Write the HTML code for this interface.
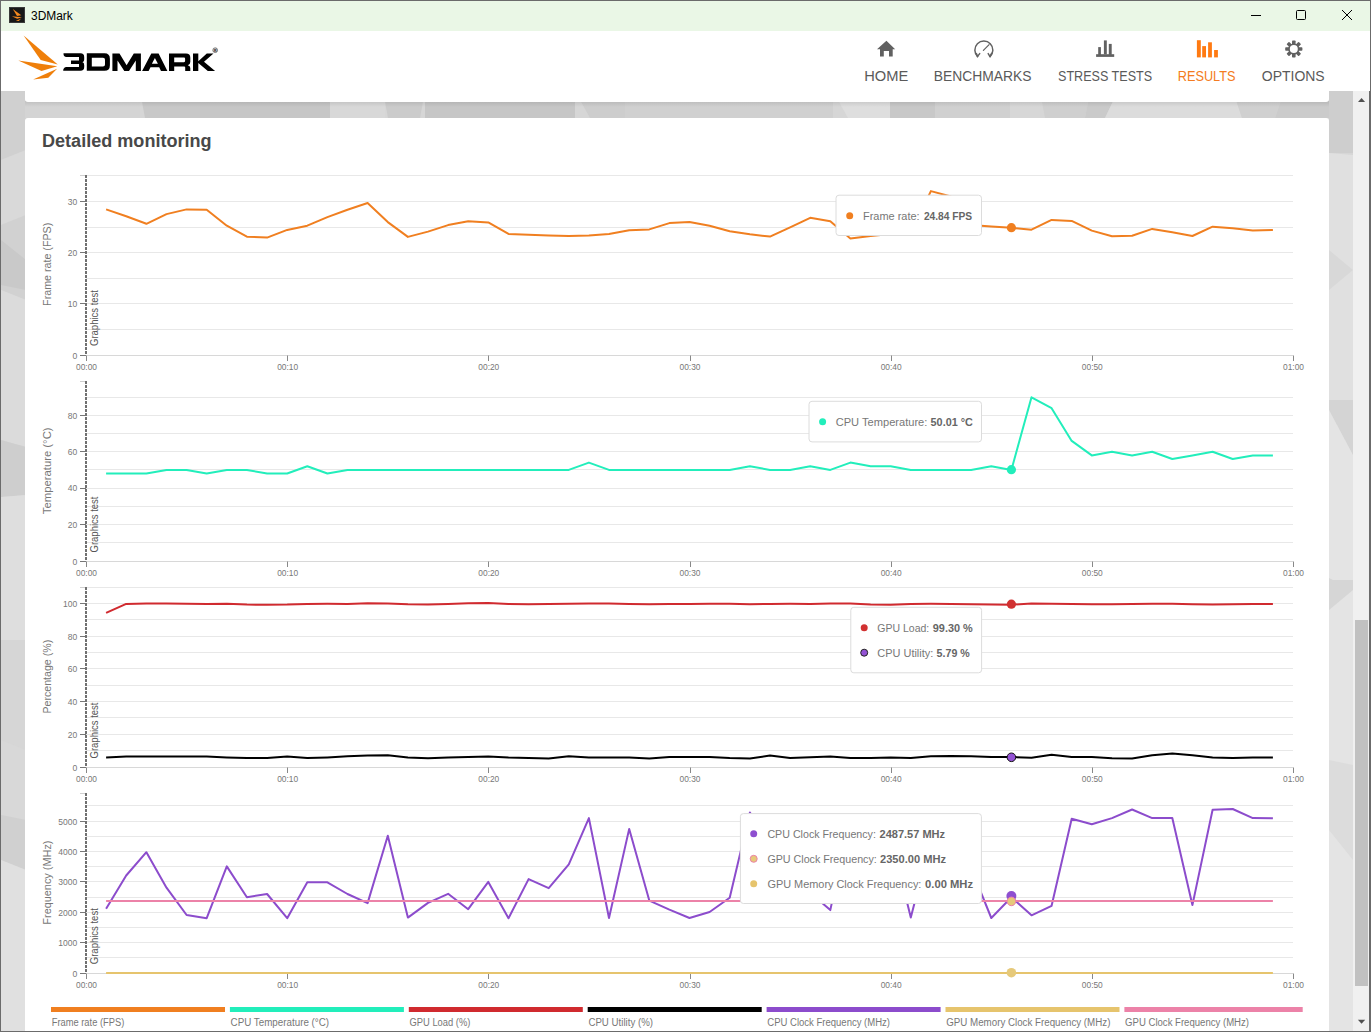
<!DOCTYPE html>
<html><head><meta charset="utf-8"><style>
html,body{margin:0;padding:0;width:1371px;height:1032px;overflow:hidden;background:#fff;font-family:"Liberation Sans",sans-serif;}
#win{position:absolute;left:0;top:0;width:1371px;height:1032px;}
</style></head><body>
<div id="win">
<div style="position:absolute;left:0;top:0;width:1371px;height:1032px;background:#6b6b6b"></div>
<div style="position:absolute;left:1px;top:1px;width:1369px;height:30px;background:#eaf7e6"></div>
<div style="position:absolute;left:1px;top:31px;width:1369px;height:60px;background:#fff"></div>

<svg style="position:absolute;left:1px;top:91px" width="1352" height="940" viewBox="1 91 1352 940">
 <rect x="1" y="91" width="1352" height="940" fill="#d6d6d6"/>
 <!-- left strip -->
 <polygon points="1,91 26,91 26,150 1,160" fill="#d0d0d0"/>
 <polygon points="1,160 26,150 26,215 1,225" fill="#d9d9d9"/>
 <polygon points="1,225 26,215 26,300 1,290" fill="#d1d1d1"/>
 <polygon points="1,240 26,260 26,290 1,285" fill="#c9c9c9"/>
 <polygon points="1,290 26,300 26,447 1,440" fill="#dbdbdb"/>
 <polygon points="1,440 26,447 26,495 1,497" fill="#cecece"/>
 <polygon points="1,497 26,495 26,640 1,640" fill="#dedede"/>
 <polygon points="1,640 26,640 26,750 1,740" fill="#d6d6d6"/>
 <polygon points="1,740 26,750 26,820 1,815" fill="#d8d8d8"/>
 <polygon points="1,815 26,820 26,870 1,860" fill="#d0d0d0"/>
 <polygon points="1,860 26,870 26,1031 1,1031" fill="#e0e0e0"/>
 <!-- gap strip -->
 <rect x="25" y="91" width="115" height="27" fill="#d4d4d4"/>
 <polygon points="140,91 200,91 200,118 145,118" fill="#c8c8c8"/>
 <rect x="200" y="91" width="130" height="27" fill="#c6c6c6"/>
 <rect x="330" y="91" width="55" height="27" fill="#d8d8d8"/>
 <polygon points="383,91 425,91 420,118 388,118" fill="#cbcbcb"/>
 <rect x="425" y="91" width="150" height="27" fill="#c6c6c6"/>
 <polygon points="575,91 625,91 625,118 590,118" fill="#cdcdcd"/>
 <rect x="625" y="91" width="208" height="27" fill="#d0d0d0"/>
 <polygon points="833,91 890,91 890,118 848,118" fill="#dedede"/>
 <polygon points="890,91 940,91 935,118 890,118" fill="#c8c8c8"/>
 <rect x="935" y="91" width="75" height="27" fill="#d0d0d0"/>
 <rect x="1010" y="91" width="30" height="27" fill="#d7d7d7"/>
 <polygon points="1040,91 1090,91 1085,118 1045,118" fill="#cfcfcf"/>
 <polygon points="1090,91 1118,91 1105,118 1085,118" fill="#cacaca"/>
 <polygon points="1118,91 1233,91 1242,118 1105,118" fill="#dcdcdc"/>
 <polygon points="1233,91 1284,91 1275,118 1242,118" fill="#d0d0d0"/>
 <polygon points="1284,91 1329,91 1329,118 1275,118" fill="#cbcbcb"/>
 <!-- right strip -->
 <rect x="1329" y="91" width="24" height="62" fill="#cecece"/>
 <polygon points="1329,153 1353,155 1353,400 1329,400" fill="#e0e0e0"/>
 <polygon points="1329,250 1353,270 1329,290" fill="#d8d8d8"/>
 <polygon points="1329,400 1353,400 1353,455 1329,410" fill="#d4d4d4"/>
 <polygon points="1329,410 1353,455 1353,580 1329,580" fill="#e4e4e4"/>
 <polygon points="1329,578 1353,590 1329,610" fill="#d6d6d6"/>
 <polygon points="1329,610 1353,590 1353,1031 1329,1031" fill="#e4e4e4"/>
 <polygon points="1329,760 1353,765 1353,860 1329,830" fill="#dcdcdc"/>
 <!-- shadow under top card -->
 <defs><linearGradient id="sh" x1="0" y1="0" x2="0" y2="1"><stop offset="0" stop-color="#000" stop-opacity="0.10"/><stop offset="1" stop-color="#000" stop-opacity="0"/></linearGradient></defs>
 <rect x="25" y="101" width="1304" height="6" fill="url(#sh)"/>
</svg>
<div style="position:absolute;left:25px;top:91px;width:1304px;height:10.5px;background:#fff;border-radius:0 0 3px 3px;"></div>
<div style="position:absolute;left:25px;top:118px;width:1304px;height:913px;background:#fff;border-radius:3px 3px 0 0"></div>
<div style="position:absolute;left:1353px;top:91px;width:16px;height:940px;background:#f0f0f0"></div>
<div style="position:absolute;left:1355px;top:620px;width:13px;height:366px;background:#c1c1c1"></div>
<svg style="position:absolute;left:0;top:0" width="1371" height="1032" viewBox="0 0 1371 1032">
 <polygon points="1358,101.9 1365.1,101.9 1361.55,97.9" fill="#505050"/>
 <polygon points="1357.9,1019.7 1365.2,1019.7 1361.55,1023.7" fill="#505050"/>
 <!-- title bar -->
 <rect x="9.5" y="7.5" width="15" height="15" fill="#181818" stroke="#3a3a3a" stroke-width="1"/>
 <g fill="#f58a1f">
  <polygon points="12.8,9.0 21.3,15.3 17.0,16.0"/>
  <polygon points="11.8,16.2 21.9,17.2 17.2,18.8"/>
  <polygon points="15.8,20.9 21.2,18.4 18.8,21.0"/>
 </g>
 <text x="31" y="19.9" font-size="12.3" fill="#000" font-family="Liberation Sans, sans-serif" textLength="41.8" lengthAdjust="spacingAndGlyphs">3DMark</text>
 <line x1="1251" x2="1261" y1="15.5" y2="15.5" stroke="#000" stroke-width="1"/>
 <rect x="1296.5" y="10.5" width="9" height="9" rx="1" fill="none" stroke="#000" stroke-width="1"/>
 <path d="M1342,10 L1352,20 M1352,10 L1342,20" stroke="#000" stroke-width="1"/>
 <text x="864.2" y="80.8" font-size="15" fill="#5a5a5a" font-family="Liberation Sans, sans-serif" textLength="44.0" lengthAdjust="spacingAndGlyphs">HOME</text>
<text x="933.8" y="80.8" font-size="15" fill="#5a5a5a" font-family="Liberation Sans, sans-serif" textLength="97.8" lengthAdjust="spacingAndGlyphs">BENCHMARKS</text>
<text x="1058.0" y="80.8" font-size="15" fill="#5a5a5a" font-family="Liberation Sans, sans-serif" textLength="94.1" lengthAdjust="spacingAndGlyphs">STRESS TESTS</text>
<text x="1177.7" y="80.8" font-size="15" fill="#f47b20" font-family="Liberation Sans, sans-serif" textLength="57.8" lengthAdjust="spacingAndGlyphs">RESULTS</text>
<text x="1261.8" y="80.8" font-size="15" fill="#5a5a5a" font-family="Liberation Sans, sans-serif" textLength="62.9" lengthAdjust="spacingAndGlyphs">OPTIONS</text>
 <text x="42" y="146.7" font-size="18.7" font-weight="bold" fill="#484848" font-family="Liberation Sans, sans-serif" textLength="169.6" lengthAdjust="spacingAndGlyphs">Detailed monitoring</text>
<line x1="86" x2="1293" y1="175.5" y2="175.5" stroke="#e8e8e8" stroke-width="1"/>
<line x1="86" x2="1293" y1="201.5" y2="201.5" stroke="#e8e8e8" stroke-width="1"/>
<line x1="86" x2="1293" y1="227.5" y2="227.5" stroke="#e8e8e8" stroke-width="1"/>
<line x1="86" x2="1293" y1="252.5" y2="252.5" stroke="#e8e8e8" stroke-width="1"/>
<line x1="86" x2="1293" y1="278.5" y2="278.5" stroke="#e8e8e8" stroke-width="1"/>
<line x1="86" x2="1293" y1="303.5" y2="303.5" stroke="#e8e8e8" stroke-width="1"/>
<line x1="86" x2="1293" y1="329.5" y2="329.5" stroke="#e8e8e8" stroke-width="1"/>
<line x1="80" x2="86" y1="175.5" y2="175.5" stroke="#d0d0d0" stroke-width="1"/>
<line x1="80" x2="1293" y1="355.5" y2="355.5" stroke="#d8d8d8" stroke-width="1"/>
<line x1="80" x2="86" y1="355.5" y2="355.5" stroke="#777" stroke-width="1"/>
<text x="77.3" y="358.9" text-anchor="end" font-size="9.5" fill="#777" font-family="Liberation Sans, sans-serif" textLength="4.8" lengthAdjust="spacingAndGlyphs">0</text>
<line x1="80" x2="86" y1="303.5" y2="303.5" stroke="#777" stroke-width="1"/>
<text x="77.3" y="306.9" text-anchor="end" font-size="9.5" fill="#777" font-family="Liberation Sans, sans-serif" textLength="9.5" lengthAdjust="spacingAndGlyphs">10</text>
<line x1="80" x2="86" y1="252.5" y2="252.5" stroke="#777" stroke-width="1"/>
<text x="77.3" y="255.7" text-anchor="end" font-size="9.5" fill="#777" font-family="Liberation Sans, sans-serif" textLength="9.5" lengthAdjust="spacingAndGlyphs">20</text>
<line x1="80" x2="86" y1="201.5" y2="201.5" stroke="#777" stroke-width="1"/>
<text x="77.3" y="204.5" text-anchor="end" font-size="9.5" fill="#777" font-family="Liberation Sans, sans-serif" textLength="9.5" lengthAdjust="spacingAndGlyphs">30</text>
<line x1="86.5" x2="86.5" y1="355.5" y2="361.0" stroke="#888" stroke-width="1"/>
<text x="86.5" y="370.0" text-anchor="middle" font-size="9.5" fill="#777" font-family="Liberation Sans, sans-serif" textLength="21" lengthAdjust="spacingAndGlyphs">00:00</text>
<line x1="287.5" x2="287.5" y1="355.5" y2="361.0" stroke="#888" stroke-width="1"/>
<text x="287.7" y="370.0" text-anchor="middle" font-size="9.5" fill="#777" font-family="Liberation Sans, sans-serif" textLength="21" lengthAdjust="spacingAndGlyphs">00:10</text>
<line x1="488.5" x2="488.5" y1="355.5" y2="361.0" stroke="#888" stroke-width="1"/>
<text x="488.8" y="370.0" text-anchor="middle" font-size="9.5" fill="#777" font-family="Liberation Sans, sans-serif" textLength="21" lengthAdjust="spacingAndGlyphs">00:20</text>
<line x1="690.5" x2="690.5" y1="355.5" y2="361.0" stroke="#888" stroke-width="1"/>
<text x="690.0" y="370.0" text-anchor="middle" font-size="9.5" fill="#777" font-family="Liberation Sans, sans-serif" textLength="21" lengthAdjust="spacingAndGlyphs">00:30</text>
<line x1="891.5" x2="891.5" y1="355.5" y2="361.0" stroke="#888" stroke-width="1"/>
<text x="891.2" y="370.0" text-anchor="middle" font-size="9.5" fill="#777" font-family="Liberation Sans, sans-serif" textLength="21" lengthAdjust="spacingAndGlyphs">00:40</text>
<line x1="1092.5" x2="1092.5" y1="355.5" y2="361.0" stroke="#888" stroke-width="1"/>
<text x="1092.3" y="370.0" text-anchor="middle" font-size="9.5" fill="#777" font-family="Liberation Sans, sans-serif" textLength="21" lengthAdjust="spacingAndGlyphs">00:50</text>
<line x1="1293.5" x2="1293.5" y1="355.5" y2="361.0" stroke="#888" stroke-width="1"/>
<text x="1293.5" y="370.0" text-anchor="middle" font-size="9.5" fill="#777" font-family="Liberation Sans, sans-serif" textLength="21" lengthAdjust="spacingAndGlyphs">01:00</text>
<line x1="86" x2="86" y1="175" y2="354" stroke="#707070" stroke-width="2" stroke-dasharray="3,1"/>
<text transform="translate(50.5 264.3) rotate(-90)" text-anchor="middle" font-size="11" fill="#777" font-family="Liberation Sans, sans-serif" textLength="83.2" lengthAdjust="spacingAndGlyphs">Frame rate (FPS)</text>
<text transform="translate(97.5 346.0) rotate(-90)" text-anchor="start" font-size="10" fill="#555" font-family="Liberation Sans, sans-serif" textLength="56" lengthAdjust="spacingAndGlyphs">Graphics test</text>
<polyline points="106.1,209.4 126.2,216.3 146.4,223.8 166.5,214.1 186.6,209.4 206.7,209.7 226.8,225.7 246.9,236.7 267.1,237.6 287.2,229.9 307.3,225.7 327.4,217.1 347.5,209.8 367.6,203.0 387.8,222.1 407.9,236.9 428.0,231.6 448.1,225.1 468.2,221.3 488.3,222.4 508.5,233.9 528.6,234.8 548.7,235.4 568.8,236.0 588.9,235.4 609.0,233.9 629.2,230.3 649.3,229.4 669.4,223.1 689.5,222.0 709.6,225.8 729.7,231.2 749.9,234.2 770.0,236.6 790.1,227.3 810.2,217.8 830.3,221.2 850.4,238.5 870.6,236.0 890.7,234.0 910.8,232.0 930.9,191.1 951.0,196.5 971.1,225.0 991.3,226.6 1011.4,227.8 1031.5,229.7 1051.6,219.9 1071.7,220.9 1091.8,230.6 1112.0,236.3 1132.1,235.7 1152.2,228.9 1172.3,232.3 1192.4,236.0 1212.6,226.7 1232.7,228.3 1252.8,230.4 1272.9,229.9" fill="none" stroke="#f07f20" stroke-width="2" stroke-linejoin="round" stroke-linecap="butt" />
<line x1="86" x2="1293" y1="542.5" y2="542.5" stroke="#e8e8e8" stroke-width="1"/>
<line x1="86" x2="1293" y1="524.5" y2="524.5" stroke="#e8e8e8" stroke-width="1"/>
<line x1="86" x2="1293" y1="506.5" y2="506.5" stroke="#e8e8e8" stroke-width="1"/>
<line x1="86" x2="1293" y1="488.5" y2="488.5" stroke="#e8e8e8" stroke-width="1"/>
<line x1="86" x2="1293" y1="469.5" y2="469.5" stroke="#e8e8e8" stroke-width="1"/>
<line x1="86" x2="1293" y1="451.5" y2="451.5" stroke="#e8e8e8" stroke-width="1"/>
<line x1="86" x2="1293" y1="433.5" y2="433.5" stroke="#e8e8e8" stroke-width="1"/>
<line x1="86" x2="1293" y1="415.5" y2="415.5" stroke="#e8e8e8" stroke-width="1"/>
<line x1="86" x2="1293" y1="397.5" y2="397.5" stroke="#e8e8e8" stroke-width="1"/>
<line x1="80" x2="86" y1="381.5" y2="381.5" stroke="#d0d0d0" stroke-width="1"/>
<line x1="80" x2="1293" y1="561.5" y2="561.5" stroke="#d8d8d8" stroke-width="1"/>
<line x1="80" x2="86" y1="561.5" y2="561.5" stroke="#777" stroke-width="1"/>
<text x="77.3" y="564.9" text-anchor="end" font-size="9.5" fill="#777" font-family="Liberation Sans, sans-serif" textLength="4.8" lengthAdjust="spacingAndGlyphs">0</text>
<line x1="80" x2="86" y1="524.5" y2="524.5" stroke="#777" stroke-width="1"/>
<text x="77.3" y="527.7" text-anchor="end" font-size="9.5" fill="#777" font-family="Liberation Sans, sans-serif" textLength="9.5" lengthAdjust="spacingAndGlyphs">20</text>
<line x1="80" x2="86" y1="488.5" y2="488.5" stroke="#777" stroke-width="1"/>
<text x="77.3" y="491.4" text-anchor="end" font-size="9.5" fill="#777" font-family="Liberation Sans, sans-serif" textLength="9.5" lengthAdjust="spacingAndGlyphs">40</text>
<line x1="80" x2="86" y1="451.5" y2="451.5" stroke="#777" stroke-width="1"/>
<text x="77.3" y="455.2" text-anchor="end" font-size="9.5" fill="#777" font-family="Liberation Sans, sans-serif" textLength="9.5" lengthAdjust="spacingAndGlyphs">60</text>
<line x1="80" x2="86" y1="415.5" y2="415.5" stroke="#777" stroke-width="1"/>
<text x="77.3" y="418.9" text-anchor="end" font-size="9.5" fill="#777" font-family="Liberation Sans, sans-serif" textLength="9.5" lengthAdjust="spacingAndGlyphs">80</text>
<line x1="86.5" x2="86.5" y1="561.5" y2="567.0" stroke="#888" stroke-width="1"/>
<text x="86.5" y="576.0" text-anchor="middle" font-size="9.5" fill="#777" font-family="Liberation Sans, sans-serif" textLength="21" lengthAdjust="spacingAndGlyphs">00:00</text>
<line x1="287.5" x2="287.5" y1="561.5" y2="567.0" stroke="#888" stroke-width="1"/>
<text x="287.7" y="576.0" text-anchor="middle" font-size="9.5" fill="#777" font-family="Liberation Sans, sans-serif" textLength="21" lengthAdjust="spacingAndGlyphs">00:10</text>
<line x1="488.5" x2="488.5" y1="561.5" y2="567.0" stroke="#888" stroke-width="1"/>
<text x="488.8" y="576.0" text-anchor="middle" font-size="9.5" fill="#777" font-family="Liberation Sans, sans-serif" textLength="21" lengthAdjust="spacingAndGlyphs">00:20</text>
<line x1="690.5" x2="690.5" y1="561.5" y2="567.0" stroke="#888" stroke-width="1"/>
<text x="690.0" y="576.0" text-anchor="middle" font-size="9.5" fill="#777" font-family="Liberation Sans, sans-serif" textLength="21" lengthAdjust="spacingAndGlyphs">00:30</text>
<line x1="891.5" x2="891.5" y1="561.5" y2="567.0" stroke="#888" stroke-width="1"/>
<text x="891.2" y="576.0" text-anchor="middle" font-size="9.5" fill="#777" font-family="Liberation Sans, sans-serif" textLength="21" lengthAdjust="spacingAndGlyphs">00:40</text>
<line x1="1092.5" x2="1092.5" y1="561.5" y2="567.0" stroke="#888" stroke-width="1"/>
<text x="1092.3" y="576.0" text-anchor="middle" font-size="9.5" fill="#777" font-family="Liberation Sans, sans-serif" textLength="21" lengthAdjust="spacingAndGlyphs">00:50</text>
<line x1="1293.5" x2="1293.5" y1="561.5" y2="567.0" stroke="#888" stroke-width="1"/>
<text x="1293.5" y="576.0" text-anchor="middle" font-size="9.5" fill="#777" font-family="Liberation Sans, sans-serif" textLength="21" lengthAdjust="spacingAndGlyphs">01:00</text>
<line x1="86" x2="86" y1="381" y2="560" stroke="#707070" stroke-width="2" stroke-dasharray="3,1"/>
<text transform="translate(50.5 470.8) rotate(-90)" text-anchor="middle" font-size="11" fill="#777" font-family="Liberation Sans, sans-serif" textLength="86.7" lengthAdjust="spacingAndGlyphs">Temperature (°C)</text>
<text transform="translate(97.5 552.5) rotate(-90)" text-anchor="start" font-size="10" fill="#555" font-family="Liberation Sans, sans-serif" textLength="56" lengthAdjust="spacingAndGlyphs">Graphics test</text>
<polyline points="106.1,473.5 126.2,473.5 146.4,473.5 166.5,469.9 186.6,469.9 206.7,473.5 226.8,469.9 246.9,469.9 267.1,473.5 287.2,473.5 307.3,466.3 327.4,473.5 347.5,469.9 367.6,469.9 387.8,469.9 407.9,469.9 428.0,469.9 448.1,469.9 468.2,469.9 488.3,469.9 508.5,469.9 528.6,469.9 548.7,469.9 568.8,469.9 588.9,462.6 609.0,469.9 629.2,469.9 649.3,469.9 669.4,469.9 689.5,469.9 709.6,469.9 729.7,469.9 749.9,466.3 770.0,469.9 790.1,469.9 810.2,466.3 830.3,469.9 850.4,462.6 870.6,466.3 890.7,466.3 910.8,469.9 930.9,469.9 951.0,469.9 971.1,469.9 991.3,466.3 1011.4,469.9 1031.5,397.3 1051.6,408.2 1071.7,440.9 1091.8,455.4 1112.0,451.8 1132.1,455.4 1152.2,451.8 1172.3,459.0 1192.4,455.4 1212.6,451.8 1232.7,459.0 1252.8,455.4 1272.9,455.4" fill="none" stroke="#22eebb" stroke-width="2" stroke-linejoin="round" stroke-linecap="butt" />
<line x1="86" x2="1293" y1="750.5" y2="750.5" stroke="#e8e8e8" stroke-width="1"/>
<line x1="86" x2="1293" y1="734.5" y2="734.5" stroke="#e8e8e8" stroke-width="1"/>
<line x1="86" x2="1293" y1="717.5" y2="717.5" stroke="#e8e8e8" stroke-width="1"/>
<line x1="86" x2="1293" y1="701.5" y2="701.5" stroke="#e8e8e8" stroke-width="1"/>
<line x1="86" x2="1293" y1="685.5" y2="685.5" stroke="#e8e8e8" stroke-width="1"/>
<line x1="86" x2="1293" y1="668.5" y2="668.5" stroke="#e8e8e8" stroke-width="1"/>
<line x1="86" x2="1293" y1="652.5" y2="652.5" stroke="#e8e8e8" stroke-width="1"/>
<line x1="86" x2="1293" y1="636.5" y2="636.5" stroke="#e8e8e8" stroke-width="1"/>
<line x1="86" x2="1293" y1="619.5" y2="619.5" stroke="#e8e8e8" stroke-width="1"/>
<line x1="86" x2="1293" y1="603.5" y2="603.5" stroke="#e8e8e8" stroke-width="1"/>
<line x1="86" x2="1293" y1="587.5" y2="587.5" stroke="#e8e8e8" stroke-width="1"/>
<line x1="80" x2="86" y1="587.5" y2="587.5" stroke="#d0d0d0" stroke-width="1"/>
<line x1="80" x2="1293" y1="767.5" y2="767.5" stroke="#d8d8d8" stroke-width="1"/>
<line x1="80" x2="86" y1="767.5" y2="767.5" stroke="#777" stroke-width="1"/>
<text x="77.3" y="770.9" text-anchor="end" font-size="9.5" fill="#777" font-family="Liberation Sans, sans-serif" textLength="4.8" lengthAdjust="spacingAndGlyphs">0</text>
<line x1="80" x2="86" y1="734.5" y2="734.5" stroke="#777" stroke-width="1"/>
<text x="77.3" y="737.6" text-anchor="end" font-size="9.5" fill="#777" font-family="Liberation Sans, sans-serif" textLength="9.5" lengthAdjust="spacingAndGlyphs">20</text>
<line x1="80" x2="86" y1="701.5" y2="701.5" stroke="#777" stroke-width="1"/>
<text x="77.3" y="704.9" text-anchor="end" font-size="9.5" fill="#777" font-family="Liberation Sans, sans-serif" textLength="9.5" lengthAdjust="spacingAndGlyphs">40</text>
<line x1="80" x2="86" y1="668.5" y2="668.5" stroke="#777" stroke-width="1"/>
<text x="77.3" y="672.3" text-anchor="end" font-size="9.5" fill="#777" font-family="Liberation Sans, sans-serif" textLength="9.5" lengthAdjust="spacingAndGlyphs">60</text>
<line x1="80" x2="86" y1="636.5" y2="636.5" stroke="#777" stroke-width="1"/>
<text x="77.3" y="639.6" text-anchor="end" font-size="9.5" fill="#777" font-family="Liberation Sans, sans-serif" textLength="9.5" lengthAdjust="spacingAndGlyphs">80</text>
<line x1="80" x2="86" y1="603.5" y2="603.5" stroke="#777" stroke-width="1"/>
<text x="77.3" y="607.0" text-anchor="end" font-size="9.5" fill="#777" font-family="Liberation Sans, sans-serif" textLength="14.2" lengthAdjust="spacingAndGlyphs">100</text>
<line x1="86.5" x2="86.5" y1="767.5" y2="773.0" stroke="#888" stroke-width="1"/>
<text x="86.5" y="782.0" text-anchor="middle" font-size="9.5" fill="#777" font-family="Liberation Sans, sans-serif" textLength="21" lengthAdjust="spacingAndGlyphs">00:00</text>
<line x1="287.5" x2="287.5" y1="767.5" y2="773.0" stroke="#888" stroke-width="1"/>
<text x="287.7" y="782.0" text-anchor="middle" font-size="9.5" fill="#777" font-family="Liberation Sans, sans-serif" textLength="21" lengthAdjust="spacingAndGlyphs">00:10</text>
<line x1="488.5" x2="488.5" y1="767.5" y2="773.0" stroke="#888" stroke-width="1"/>
<text x="488.8" y="782.0" text-anchor="middle" font-size="9.5" fill="#777" font-family="Liberation Sans, sans-serif" textLength="21" lengthAdjust="spacingAndGlyphs">00:20</text>
<line x1="690.5" x2="690.5" y1="767.5" y2="773.0" stroke="#888" stroke-width="1"/>
<text x="690.0" y="782.0" text-anchor="middle" font-size="9.5" fill="#777" font-family="Liberation Sans, sans-serif" textLength="21" lengthAdjust="spacingAndGlyphs">00:30</text>
<line x1="891.5" x2="891.5" y1="767.5" y2="773.0" stroke="#888" stroke-width="1"/>
<text x="891.2" y="782.0" text-anchor="middle" font-size="9.5" fill="#777" font-family="Liberation Sans, sans-serif" textLength="21" lengthAdjust="spacingAndGlyphs">00:40</text>
<line x1="1092.5" x2="1092.5" y1="767.5" y2="773.0" stroke="#888" stroke-width="1"/>
<text x="1092.3" y="782.0" text-anchor="middle" font-size="9.5" fill="#777" font-family="Liberation Sans, sans-serif" textLength="21" lengthAdjust="spacingAndGlyphs">00:50</text>
<line x1="1293.5" x2="1293.5" y1="767.5" y2="773.0" stroke="#888" stroke-width="1"/>
<text x="1293.5" y="782.0" text-anchor="middle" font-size="9.5" fill="#777" font-family="Liberation Sans, sans-serif" textLength="21" lengthAdjust="spacingAndGlyphs">01:00</text>
<line x1="86" x2="86" y1="587" y2="766" stroke="#707070" stroke-width="2" stroke-dasharray="3,1"/>
<text transform="translate(50.5 676.7) rotate(-90)" text-anchor="middle" font-size="11" fill="#777" font-family="Liberation Sans, sans-serif" textLength="73.8" lengthAdjust="spacingAndGlyphs">Percentage (%)</text>
<text transform="translate(97.5 758.5) rotate(-90)" text-anchor="start" font-size="10" fill="#555" font-family="Liberation Sans, sans-serif" textLength="56" lengthAdjust="spacingAndGlyphs">Graphics test</text>
<polyline points="106.1,612.9 126.2,603.9 146.4,603.6 166.5,603.6 186.6,603.8 206.7,603.9 226.8,603.8 246.9,604.6 267.1,604.7 287.2,604.6 307.3,603.9 327.4,603.8 347.5,603.9 367.6,603.3 387.8,603.4 407.9,604.3 428.0,604.6 448.1,604.1 468.2,603.3 488.3,603.1 508.5,603.9 528.6,604.3 548.7,604.1 568.8,603.8 588.9,603.4 609.0,603.6 629.2,604.1 649.3,604.3 669.4,603.9 689.5,603.9 709.6,603.8 729.7,603.8 749.9,604.3 770.0,603.9 790.1,603.8 810.2,603.9 830.3,603.4 850.4,603.6 870.6,604.6 890.7,604.7 910.8,603.9 930.9,603.8 951.0,603.9 971.1,604.3 991.3,604.4 1011.4,604.7 1031.5,603.6 1051.6,603.8 1071.7,603.9 1091.8,604.3 1112.0,604.3 1132.1,604.1 1152.2,603.8 1172.3,603.8 1192.4,604.3 1212.6,604.4 1232.7,604.3 1252.8,603.9 1272.9,603.9" fill="none" stroke="#d02a2f" stroke-width="2" stroke-linejoin="round" stroke-linecap="butt" />
<polyline points="106.1,757.6 126.2,756.6 146.4,756.6 166.5,756.6 186.6,756.6 206.7,756.6 226.8,757.4 246.9,758.1 267.1,758.1 287.2,756.6 307.3,758.1 327.4,757.4 347.5,756.3 367.6,755.5 387.8,755.2 407.9,757.6 428.0,758.3 448.1,757.6 468.2,757.0 488.3,756.6 508.5,757.6 528.6,758.1 548.7,758.6 568.8,756.3 588.9,757.6 609.0,757.4 629.2,757.6 649.3,758.6 669.4,757.0 689.5,757.0 709.6,757.0 729.7,758.1 749.9,758.6 770.0,755.5 790.1,758.1 810.2,757.3 830.3,756.6 850.4,758.1 870.6,758.1 890.7,757.4 910.8,758.1 930.9,756.3 951.0,756.0 971.1,756.3 991.3,757.0 1011.4,757.1 1031.5,757.8 1051.6,754.8 1071.7,757.1 1091.8,757.1 1112.0,758.3 1132.1,758.6 1152.2,755.2 1172.3,753.5 1192.4,755.2 1212.6,757.6 1232.7,758.1 1252.8,757.6 1272.9,757.6" fill="none" stroke="#000000" stroke-width="2" stroke-linejoin="round" stroke-linecap="butt" />
<line x1="86" x2="1293" y1="957.5" y2="957.5" stroke="#e8e8e8" stroke-width="1"/>
<line x1="86" x2="1293" y1="942.5" y2="942.5" stroke="#e8e8e8" stroke-width="1"/>
<line x1="86" x2="1293" y1="927.5" y2="927.5" stroke="#e8e8e8" stroke-width="1"/>
<line x1="86" x2="1293" y1="912.5" y2="912.5" stroke="#e8e8e8" stroke-width="1"/>
<line x1="86" x2="1293" y1="897.5" y2="897.5" stroke="#e8e8e8" stroke-width="1"/>
<line x1="86" x2="1293" y1="881.5" y2="881.5" stroke="#e8e8e8" stroke-width="1"/>
<line x1="86" x2="1293" y1="866.5" y2="866.5" stroke="#e8e8e8" stroke-width="1"/>
<line x1="86" x2="1293" y1="851.5" y2="851.5" stroke="#e8e8e8" stroke-width="1"/>
<line x1="86" x2="1293" y1="836.5" y2="836.5" stroke="#e8e8e8" stroke-width="1"/>
<line x1="86" x2="1293" y1="821.5" y2="821.5" stroke="#e8e8e8" stroke-width="1"/>
<line x1="86" x2="1293" y1="805.5" y2="805.5" stroke="#e8e8e8" stroke-width="1"/>
<line x1="80" x2="86" y1="793.5" y2="793.5" stroke="#d0d0d0" stroke-width="1"/>
<line x1="80" x2="1293" y1="973.5" y2="973.5" stroke="#d8d8d8" stroke-width="1"/>
<line x1="80" x2="86" y1="973.5" y2="973.5" stroke="#777" stroke-width="1"/>
<text x="77.3" y="976.9" text-anchor="end" font-size="9.5" fill="#777" font-family="Liberation Sans, sans-serif" textLength="4.8" lengthAdjust="spacingAndGlyphs">0</text>
<line x1="80" x2="86" y1="942.5" y2="942.5" stroke="#777" stroke-width="1"/>
<text x="77.3" y="945.8" text-anchor="end" font-size="9.5" fill="#777" font-family="Liberation Sans, sans-serif" textLength="19.0" lengthAdjust="spacingAndGlyphs">1000</text>
<line x1="80" x2="86" y1="912.5" y2="912.5" stroke="#777" stroke-width="1"/>
<text x="77.3" y="915.5" text-anchor="end" font-size="9.5" fill="#777" font-family="Liberation Sans, sans-serif" textLength="19.0" lengthAdjust="spacingAndGlyphs">2000</text>
<line x1="80" x2="86" y1="881.5" y2="881.5" stroke="#777" stroke-width="1"/>
<text x="77.3" y="885.2" text-anchor="end" font-size="9.5" fill="#777" font-family="Liberation Sans, sans-serif" textLength="19.0" lengthAdjust="spacingAndGlyphs">3000</text>
<line x1="80" x2="86" y1="851.5" y2="851.5" stroke="#777" stroke-width="1"/>
<text x="77.3" y="854.9" text-anchor="end" font-size="9.5" fill="#777" font-family="Liberation Sans, sans-serif" textLength="19.0" lengthAdjust="spacingAndGlyphs">4000</text>
<line x1="80" x2="86" y1="821.5" y2="821.5" stroke="#777" stroke-width="1"/>
<text x="77.3" y="824.6" text-anchor="end" font-size="9.5" fill="#777" font-family="Liberation Sans, sans-serif" textLength="19.0" lengthAdjust="spacingAndGlyphs">5000</text>
<line x1="86.5" x2="86.5" y1="973.5" y2="979.0" stroke="#888" stroke-width="1"/>
<text x="86.5" y="988.0" text-anchor="middle" font-size="9.5" fill="#777" font-family="Liberation Sans, sans-serif" textLength="21" lengthAdjust="spacingAndGlyphs">00:00</text>
<line x1="287.5" x2="287.5" y1="973.5" y2="979.0" stroke="#888" stroke-width="1"/>
<text x="287.7" y="988.0" text-anchor="middle" font-size="9.5" fill="#777" font-family="Liberation Sans, sans-serif" textLength="21" lengthAdjust="spacingAndGlyphs">00:10</text>
<line x1="488.5" x2="488.5" y1="973.5" y2="979.0" stroke="#888" stroke-width="1"/>
<text x="488.8" y="988.0" text-anchor="middle" font-size="9.5" fill="#777" font-family="Liberation Sans, sans-serif" textLength="21" lengthAdjust="spacingAndGlyphs">00:20</text>
<line x1="690.5" x2="690.5" y1="973.5" y2="979.0" stroke="#888" stroke-width="1"/>
<text x="690.0" y="988.0" text-anchor="middle" font-size="9.5" fill="#777" font-family="Liberation Sans, sans-serif" textLength="21" lengthAdjust="spacingAndGlyphs">00:30</text>
<line x1="891.5" x2="891.5" y1="973.5" y2="979.0" stroke="#888" stroke-width="1"/>
<text x="891.2" y="988.0" text-anchor="middle" font-size="9.5" fill="#777" font-family="Liberation Sans, sans-serif" textLength="21" lengthAdjust="spacingAndGlyphs">00:40</text>
<line x1="1092.5" x2="1092.5" y1="973.5" y2="979.0" stroke="#888" stroke-width="1"/>
<text x="1092.3" y="988.0" text-anchor="middle" font-size="9.5" fill="#777" font-family="Liberation Sans, sans-serif" textLength="21" lengthAdjust="spacingAndGlyphs">00:50</text>
<line x1="1293.5" x2="1293.5" y1="973.5" y2="979.0" stroke="#888" stroke-width="1"/>
<text x="1293.5" y="988.0" text-anchor="middle" font-size="9.5" fill="#777" font-family="Liberation Sans, sans-serif" textLength="21" lengthAdjust="spacingAndGlyphs">01:00</text>
<line x1="86" x2="86" y1="793" y2="972" stroke="#707070" stroke-width="2" stroke-dasharray="3,1"/>
<text transform="translate(50.5 882.6) rotate(-90)" text-anchor="middle" font-size="11" fill="#777" font-family="Liberation Sans, sans-serif" textLength="84.1" lengthAdjust="spacingAndGlyphs">Frequency (MHz)</text>
<text transform="translate(97.5 964.2) rotate(-90)" text-anchor="start" font-size="10" fill="#555" font-family="Liberation Sans, sans-serif" textLength="56" lengthAdjust="spacingAndGlyphs">Graphics test</text>
<polyline points="106.1,908.7 126.2,875.5 146.4,852.2 166.5,887.7 186.6,915.0 206.7,918.2 226.8,866.4 246.9,897.2 267.1,894.0 287.2,918.2 307.3,882.3 327.4,882.3 347.5,894.0 367.6,903.1 387.8,835.7 407.9,917.6 428.0,902.9 448.1,893.8 468.2,909.2 488.3,881.9 508.5,918.3 528.6,879.1 548.7,888.2 568.8,864.4 588.9,818.1 609.0,918.0 629.2,828.9 649.3,900.6 669.4,909.7 689.5,918.0 709.6,912.0 729.7,897.7 749.9,812.4 770.0,845.4 790.1,863.6 810.2,892.7 830.3,910.1 850.4,815.1 870.6,851.5 890.7,835.7 910.8,917.6 930.9,839.4 951.0,851.5 971.1,868.2 991.3,918.0 1011.4,897.3 1031.5,915.3 1051.6,905.8 1071.7,818.8 1091.8,824.2 1112.0,818.1 1132.1,809.5 1152.2,818.1 1172.3,818.1 1192.4,905.1 1212.6,809.7 1232.7,809.0 1252.8,818.1 1272.9,818.2" fill="none" stroke="#8c4ccc" stroke-width="2" stroke-linejoin="round" stroke-linecap="butt" />
<line x1="106.1" x2="1272.9" y1="901" y2="901" stroke="#ec82a8" stroke-width="2"/>
<line x1="106.1" x2="1272.9" y1="973" y2="973" stroke="#e6c46d" stroke-width="2"/>
<circle cx="1011.4" cy="227.7" r="4.6" fill="#f07f20"/>
<circle cx="1011.4" cy="469.7" r="4.6" fill="#22eebb"/>
<circle cx="1011.4" cy="604.2" r="4.6" fill="#d13131"/>
<circle cx="1011.4" cy="757.3" r="4.3" fill="#9352d4" stroke="#111" stroke-width="1"/>
<circle cx="1011.4" cy="896" r="5" fill="#8e4fd0"/>
<circle cx="1011.4" cy="901.4" r="4.3" fill="#e6c97a" stroke="#ec82a8" stroke-width="1"/>
<circle cx="1011.4" cy="972.7" r="4.8" fill="#e6c97a"/>
<rect x="836.0" y="195.2" width="145.5" height="40.3" rx="3" fill="#fff" stroke="#dcdcdc" stroke-width="1"/>
<circle cx="849.7" cy="215.8" r="3.5" fill="#f07f20" />
<text x="863.0" y="220.3" font-size="11.5" fill="#777" font-family="Liberation Sans, sans-serif" textLength="56.6" lengthAdjust="spacingAndGlyphs">Frame rate:</text>
<text x="923.9" y="220.3" font-size="11.5" font-weight="bold" fill="#666" font-family="Liberation Sans, sans-serif" textLength="48.3" lengthAdjust="spacingAndGlyphs">24.84 FPS</text>
<rect x="809.0" y="401.3" width="172.5" height="40.6" rx="3" fill="#fff" stroke="#dcdcdc" stroke-width="1"/>
<circle cx="822.6" cy="421.7" r="3.5" fill="#22eebb" />
<text x="835.7" y="426.2" font-size="11.5" fill="#777" font-family="Liberation Sans, sans-serif" textLength="91.7" lengthAdjust="spacingAndGlyphs">CPU Temperature:</text>
<text x="930.6" y="426.2" font-size="11.5" font-weight="bold" fill="#666" font-family="Liberation Sans, sans-serif" textLength="42.3" lengthAdjust="spacingAndGlyphs">50.01 °C</text>
<rect x="850.8" y="607.3" width="130.8" height="65.5" rx="3" fill="#fff" stroke="#dcdcdc" stroke-width="1"/>
<circle cx="864.2" cy="627.7" r="3.5" fill="#d13131" />
<text x="877.3" y="632.2" font-size="11.5" fill="#777" font-family="Liberation Sans, sans-serif" textLength="52.0" lengthAdjust="spacingAndGlyphs">GPU Load:</text>
<text x="932.8" y="632.2" font-size="11.5" font-weight="bold" fill="#666" font-family="Liberation Sans, sans-serif" textLength="40.0" lengthAdjust="spacingAndGlyphs">99.30 %</text>
<circle cx="864.2" cy="652.7" r="3.5" fill="#9352d4" stroke="#222" stroke-width="1"/>
<text x="877.3" y="657.2" font-size="11.5" fill="#777" font-family="Liberation Sans, sans-serif" textLength="56.0" lengthAdjust="spacingAndGlyphs">CPU Utility:</text>
<text x="936.6" y="657.2" font-size="11.5" font-weight="bold" fill="#666" font-family="Liberation Sans, sans-serif" textLength="33.2" lengthAdjust="spacingAndGlyphs">5.79 %</text>
<rect x="740.4" y="813.6" width="241.0" height="89.9" rx="3" fill="#fff" stroke="#dcdcdc" stroke-width="1"/>
<circle cx="753.7" cy="833.7" r="3.5" fill="#8e4fd0" />
<text x="767.4" y="838.2" font-size="11.5" fill="#777" font-family="Liberation Sans, sans-serif" textLength="108.5" lengthAdjust="spacingAndGlyphs">CPU Clock Frequency:</text>
<text x="879.5" y="838.2" font-size="11.5" font-weight="bold" fill="#666" font-family="Liberation Sans, sans-serif" textLength="65.6" lengthAdjust="spacingAndGlyphs">2487.57 MHz</text>
<circle cx="753.7" cy="858.8" r="3.5" fill="#e6c97a" stroke="#ec82a8" stroke-width="1"/>
<text x="767.4" y="863.3" font-size="11.5" fill="#777" font-family="Liberation Sans, sans-serif" textLength="109.4" lengthAdjust="spacingAndGlyphs">GPU Clock Frequency:</text>
<text x="880.0" y="863.3" font-size="11.5" font-weight="bold" fill="#666" font-family="Liberation Sans, sans-serif" textLength="66.0" lengthAdjust="spacingAndGlyphs">2350.00 MHz</text>
<circle cx="753.7" cy="883.8" r="3.5" fill="#e6c46d" />
<text x="767.4" y="888.3" font-size="11.5" fill="#777" font-family="Liberation Sans, sans-serif" textLength="154.0" lengthAdjust="spacingAndGlyphs">GPU Memory Clock Frequency:</text>
<text x="925.1" y="888.3" font-size="11.5" font-weight="bold" fill="#666" font-family="Liberation Sans, sans-serif" textLength="47.9" lengthAdjust="spacingAndGlyphs">0.00 MHz</text>
<rect x="51.0" y="1007" width="174.0" height="5" fill="#f07f20"/>
<text x="51.7" y="1026" font-size="10" fill="#777" font-family="Liberation Sans, sans-serif" textLength="72.6" lengthAdjust="spacingAndGlyphs">Frame rate (FPS)</text>
<rect x="229.9" y="1007" width="174.0" height="5" fill="#22eebb"/>
<text x="230.6" y="1026" font-size="10" fill="#777" font-family="Liberation Sans, sans-serif" textLength="98.5" lengthAdjust="spacingAndGlyphs">CPU Temperature (°C)</text>
<rect x="408.8" y="1007" width="174.0" height="5" fill="#d02a2f"/>
<text x="409.5" y="1026" font-size="10" fill="#777" font-family="Liberation Sans, sans-serif" textLength="60.9" lengthAdjust="spacingAndGlyphs">GPU Load (%)</text>
<rect x="587.7" y="1007" width="174.0" height="5" fill="#000000"/>
<text x="588.4" y="1026" font-size="10" fill="#777" font-family="Liberation Sans, sans-serif" textLength="64.6" lengthAdjust="spacingAndGlyphs">CPU Utility (%)</text>
<rect x="766.6" y="1007" width="174.0" height="5" fill="#8c4ccc"/>
<text x="767.3" y="1026" font-size="10" fill="#777" font-family="Liberation Sans, sans-serif" textLength="122.7" lengthAdjust="spacingAndGlyphs">CPU Clock Frequency (MHz)</text>
<rect x="945.5" y="1007" width="174.0" height="5" fill="#e6c46d"/>
<text x="946.2" y="1026" font-size="10" fill="#777" font-family="Liberation Sans, sans-serif" textLength="164.2" lengthAdjust="spacingAndGlyphs">GPU Memory Clock Frequency (MHz)</text>
<rect x="1124.4" y="1007" width="178.3" height="5" fill="#ec82a8"/>
<text x="1125.1" y="1026" font-size="10" fill="#777" font-family="Liberation Sans, sans-serif" textLength="123.9" lengthAdjust="spacingAndGlyphs">GPU Clock Frequency (MHz)</text>
</svg>

<svg style="position:absolute;left:0;top:0" width="260" height="91" viewBox="0 0 260 91">
 <g fill="#ef7f0a">
  <polygon points="23.6,35.5 57.8,64.5 40.7,60"/>
  <polygon points="18.3,60.5 57.3,66.3 41.5,71"/>
  <polygon points="33.1,79.6 57.1,68.8 48.3,77.8"/>
 </g>
 <g fill="#000">
  <!-- 3 -->
  <path d="M63.5,53.3 H80.5 Q84.2,53.3 84.2,57 V59.6 Q84.2,62 82.5,62.2 Q84.2,62.5 84.2,65 V67 Q84.2,70.8 80.5,70.8 H63.2 Q63,68 66,67.1 H79 V64 H71 V60.5 H79 V57.1 H66.5 Q63.3,57 63.5,53.3 Z"/>
  <!-- D -->
  <path d="M86.8,53.3 H104.5 Q109.9,53.3 109.9,58.8 V65.3 Q109.9,70.8 104.5,70.8 H86.8 Z M91.8,57.8 V66.4 H103 Q105,66.4 105,64.4 V59.8 Q105,57.8 103,57.8 Z" fill-rule="evenodd"/>
  <!-- M -->
  <path d="M112.4,53.6 H119.5 L126.6,65.3 L133.8,53.6 H140.9 V70.9 H135.8 V60.5 L129,70.9 H124.3 L117.5,60.5 V70.9 H112.4 Z"/>
  <!-- A -->
  <path d="M151.3,53.6 H158.6 L167.4,70.9 H161 L159.2,67.3 H150.5 L148.6,70.9 H142.1 Z M154.9,58 L151.9,63.8 H157.9 Z" fill-rule="evenodd"/>
  <!-- R -->
  <path d="M169,53.6 H186 Q190.3,53.6 190.3,57.8 V62 Q190.3,64.6 187.8,65.3 Q190.3,65.8 190.3,68 V70.9 H185.2 V67.5 Q185.2,66.5 184.2,66.5 H174.2 V70.9 H169 Z M174.2,57.6 V62.2 H184 Q185.1,62.2 185.1,61.1 V58.7 Q185.1,57.6 184,57.6 Z" fill-rule="evenodd"/>
  <!-- K -->
  <path d="M193,53.6 H198.3 V61.2 L206.8,53.6 H213.5 L204,61.8 L215.1,70.9 H207.8 L198.3,63 V70.9 H193 Z"/>
 </g>
 <circle cx="215.2" cy="50.2" r="2.4" fill="#cfcfcf" stroke="#444" stroke-width="0.6"/><text x="215.2" y="51.9" font-size="3.6" font-weight="bold" text-anchor="middle" fill="#222" font-family="Liberation Sans, sans-serif">R</text>
</svg>
<svg style="position:absolute;left:0;top:0" width="1371" height="91" viewBox="0 0 1371 91">
 <g fill="#616161">
  <!-- home -->
  <path d="M886.4,40.8 L895.2,49.3 L892.7,49.3 V56.4 H889 V50.9 H883.8 V56.4 H880 V49.3 L877,49.3 Z"/>
  <!-- stress -->
  <rect x="1096.1" y="54.2" width="18.1" height="2.7"/>
  <rect x="1098.2" y="47.1" width="2.7" height="8"/>
  <rect x="1103.9" y="40.4" width="2.9" height="14"/>
  <rect x="1108.8" y="43.9" width="2.9" height="11"/>
 </g>
 <!-- gauge -->
 <g fill="none" stroke="#616161" stroke-width="1.5" stroke-linecap="round" stroke-linejoin="round">
  <path d="M977.7,56.6 A9,9 0 1 1 990,56.6"/>
  <path d="M979.7,53.6 L977.4,56.6 L976.4,53.6"/>
  <path d="M988.2,53.6 L990,56.6 L991.6,53.2"/>
  <path d="M983.4,50.4 L989.1,44.6" stroke-width="1.2"/>
 </g>
 <!-- results -->
 <g fill="#ff7a12">
  <rect x="1196.9" y="40.2" width="3.9" height="17.2"/>
  <rect x="1202.2" y="46.1" width="3.8" height="11.3"/>
  <rect x="1208.1" y="42.3" width="3.8" height="15.1"/>
  <rect x="1214.1" y="50" width="3.8" height="7.4"/>
 </g>
 <!-- gear -->
 <g fill="#616161">
  <g transform="translate(1293.8 49)">
   <rect x="-1.8" y="-8.6" width="3.6" height="17.2" rx="0.8"/>
   <rect x="-1.8" y="-8.6" width="3.6" height="17.2" rx="0.8" transform="rotate(45)"/>
   <rect x="-1.8" y="-8.6" width="3.6" height="17.2" rx="0.8" transform="rotate(90)"/>
   <rect x="-1.8" y="-8.6" width="3.6" height="17.2" rx="0.8" transform="rotate(135)"/>
   <circle r="5.6" fill="#616161"/>
   <circle r="4.0" fill="#fff"/>
  </g>
 </g>
</svg>
</div>
</body></html>
